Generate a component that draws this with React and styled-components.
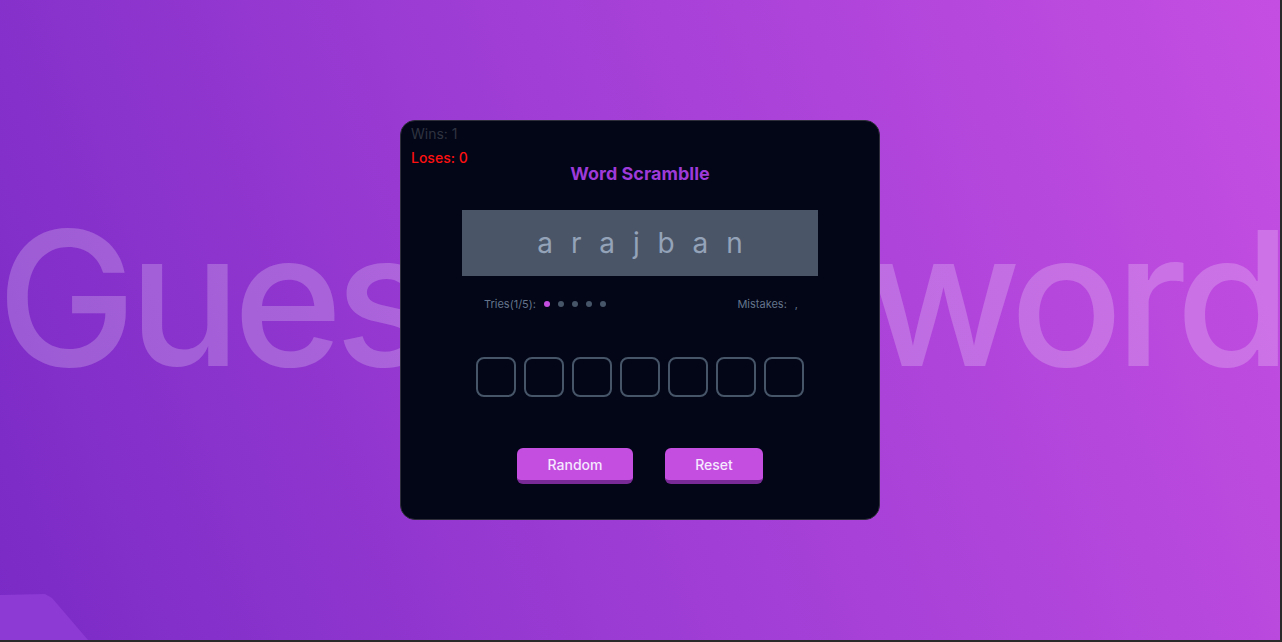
import styled, { createGlobalStyle } from "styled-components"

const GlobalStyle = createGlobalStyle`
  * { box-sizing: border-box; }
  html, body { margin: 0; padding: 0; }
  body {
    background: #2a2a2a;
    font-family: "Inter", "Lato", sans-serif;
  }
`

const Page = styled.main`
  position: relative;
  width: calc(100vw - 2px);
  height: 640px;
  overflow: hidden;
  display: grid;
  grid-template-columns: 100%;
  grid-template-rows: 100%;
  place-items: center;
  background: linear-gradient(70deg, #7a2ac6 0%, #9a3bd3 40%, #c54ee2 100%);
`

const Backdrop = styled.h1`
  grid-area: 1 / 1;
  align-self: start;
  justify-self: center;
  margin: 205px 0 0;
  font-size: 187px;
  font-weight: 500;
  letter-spacing: -8px;
  line-height: 1;
  white-space: nowrap;
  color: rgba(255, 255, 255, 0.22);
  user-select: none;
`

const Corner = styled.svg`
  position: absolute;
  left: 0;
  bottom: 0;
`

const Card = styled.section`
  grid-area: 1 / 1;
  position: relative;
  z-index: 1;
  width: 480px;
  height: 400px;
  background: #020617;
  border: 1px solid #2e2e3a;
  border-radius: 15px;
  padding-top: 42px;
  display: flex;
  flex-direction: column;
  align-items: center;
`

const Stats = styled.div`
  position: absolute;
  top: 4px;
  left: 10px;
  display: flex;
  flex-direction: column;
  gap: 6px;
  font-size: 14px;
  line-height: 18px;
`

const Stat = styled.span`
  color: ${(p) => p.$color};
  font-weight: ${(p) => p.$weight || 400};
`

const Title = styled.h2`
  margin: 0;
  font-size: 18px;
  line-height: 22px;
  font-weight: 700;
  color: #9d3ad8;
`

const Scrambled = styled.div`
  margin-top: 25px;
  width: 356px;
  height: 66px;
  background: #4a5568;
  display: flex;
  align-items: center;
  justify-content: center;
  font-size: 28px;
  line-height: 1;
  letter-spacing: 5px;
  padding-left: 5px;
  white-space: pre;
  color: #94a3b8;
`

const InfoRow = styled.div`
  margin-top: 21px;
  width: 356px;
  padding: 0 20px 0 22px;
  display: flex;
  justify-content: space-between;
  align-items: center;
  font-size: 11px;
  color: #64748b;
`

const Group = styled.div`
  display: flex;
  align-items: center;
  gap: ${(p) => p.$gap || 0}px;
`

const Dots = styled.div`
  display: flex;
  gap: 8px;
`

const Dot = styled.span`
  width: 6px;
  height: 6px;
  border-radius: 50%;
  background: ${(p) => (p.$active ? "#c44ee0" : "#475569")};
`

const Slots = styled.div`
  margin-top: 46px;
  display: flex;
  gap: 8px;
`

const Slot = styled.input`
  width: 40px;
  height: 40px;
  border: 2px solid #475569;
  border-radius: 8px;
  background: transparent;
  color: #cbd5e1;
  text-align: center;
  font-size: 18px;
  outline: none;
`

const Buttons = styled.div`
  margin-top: 51px;
  display: flex;
  gap: 32px;
`

const Button = styled.button`
  width: ${(p) => p.$w}px;
  height: 36px;
  border: none;
  border-bottom: 4px solid #7a2a96;
  border-radius: 6px;
  background: #c44ee0;
  color: #f5e8ff;
  font-family: inherit;
  font-size: 14px;
  font-weight: 500;
  padding: 0;
  cursor: pointer;
`

const word = "arajban"

const App = () => {
  return (
    <>
      <GlobalStyle />
      <Page>
        <Backdrop>Guess the word</Backdrop>
        <Corner width="90" height="46" viewBox="0 0 90 46">
          <polygon points="0,1 45,0 52,4 88,46 0,46" fill="#8d3ad4" />
        </Corner>

        <Card>
          <Stats>
            <Stat $color="#2f3340">Wins: 1</Stat>
            <Stat $color="#ff1010" $weight={500}>Loses: 0</Stat>
          </Stats>

          <Title>Word Scramblle</Title>

          <Scrambled>{word.split("").join(" ")}</Scrambled>

          <InfoRow>
            <Group $gap={8}>
              <span>Tries(1/5):</span>
              <Dots>
                {[0, 1, 2, 3, 4].map((i) => (
                  <Dot key={i} $active={i === 0} />
                ))}
              </Dots>
            </Group>
            <Group $gap={8}>
              <span>Mistakes:</span>
              <span>,</span>
            </Group>
          </InfoRow>

          <Slots>
            {word.split("").map((_, i) => (
              <Slot key={i} maxLength={1} />
            ))}
          </Slots>

          <Buttons>
            <Button $w={116}>Random</Button>
            <Button $w={98}>Reset</Button>
          </Buttons>
        </Card>
      </Page>
    </>
  )
}

export default App
